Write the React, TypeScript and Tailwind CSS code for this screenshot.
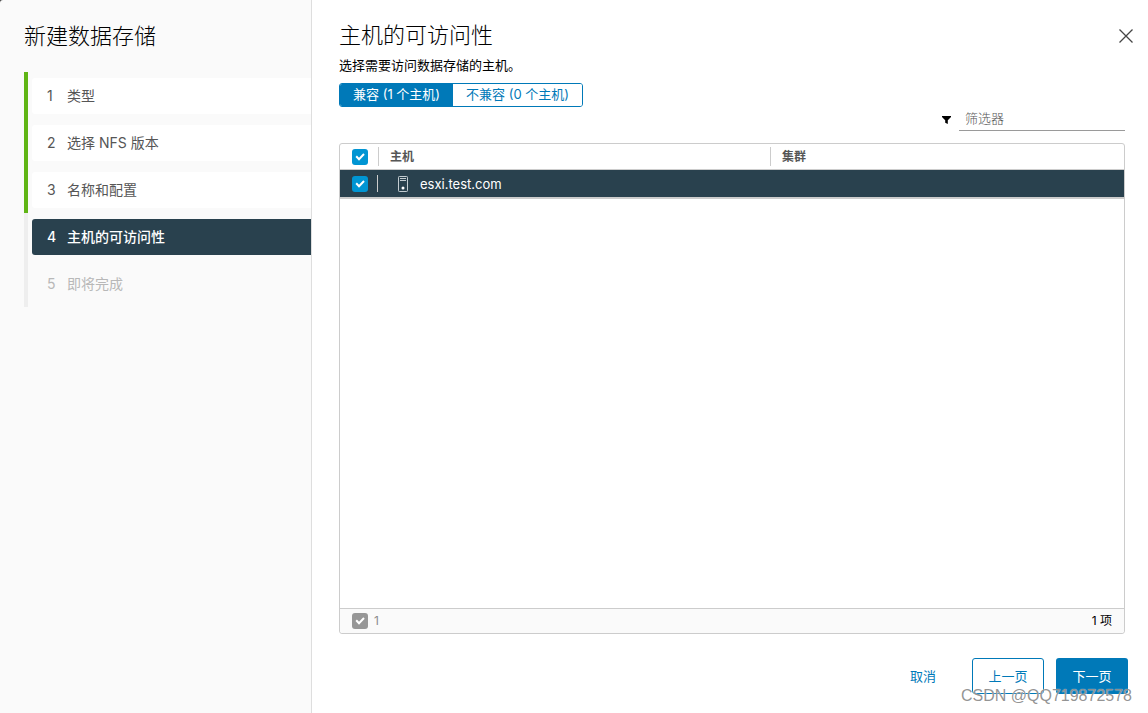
import { useState } from "react";

type StepState = "done" | "current" | "upcoming";

const steps: { label: string; state: StepState }[] = [
  { label: "类型", state: "done" },
  { label: "选择 NFS 版本", state: "done" },
  { label: "名称和配置", state: "done" },
  { label: "主机的可访问性", state: "current" },
  { label: "即将完成", state: "upcoming" },
];

const railStyles: Record<StepState, string> = {
  done: "border-[#60b515]",
  current: "border-[#eeeeee]",
  upcoming: "border-[#eeeeee]",
};

const stepStyles: Record<StepState, string> = {
  done: "bg-white text-[#565656]",
  current: "bg-[#29414e] font-medium text-white",
  upcoming: "text-[#b8b8b8]",
};

function Sidebar() {
  return (
    <aside className="w-[312px] shrink-0 border-r border-[#dedede] pt-5">
      <h1 className="pl-6 text-[22px] leading-8 font-light text-black">新建数据存储</h1>
      <ol className="mt-5 pl-6">
        {steps.map((step, i) => (
          <li
            key={step.label}
            className={`h-[47px] border-l-4 pt-1.5 pl-1 ${railStyles[step.state]}`}
          >
            <button
              type="button"
              disabled={step.state === "upcoming"}
              aria-current={step.state === "current" ? "step" : undefined}
              className={`flex h-9 w-full items-center rounded-l-[3px] pl-[15px] text-left text-sm ${stepStyles[step.state]}`}
            >
              <span className="w-5">{i + 1}</span>
              <span>{step.label}</span>
            </button>
          </li>
        ))}
      </ol>
    </aside>
  );
}

function Checkbox({
  label,
  checked,
  onChange,
  muted = false,
}: {
  label: string;
  checked: boolean;
  onChange?: (value: boolean) => void;
  muted?: boolean;
}) {
  const fill = muted ? "checked:bg-[#979797]" : "checked:bg-[#0095d3]";
  return (
    <span className="inline-grid size-4 align-middle">
      <input
        type="checkbox"
        aria-label={label}
        checked={checked}
        disabled={muted}
        onChange={(e) => onChange?.(e.target.checked)}
        className={`col-start-1 row-start-1 size-4 appearance-none rounded-[3px] border border-[#8c8c8c] bg-white checked:border-0 ${fill}`}
      />
      {checked && (
        <svg
          viewBox="0 0 16 16"
          className="pointer-events-none col-start-1 row-start-1 size-4"
          fill="none"
          stroke="white"
          strokeWidth="2"
          aria-hidden="true"
        >
          <path d="M4.2 7.3 7 10.2 12 5" />
        </svg>
      )}
    </span>
  );
}

function HostIcon() {
  return (
    <svg width="11" height="16" viewBox="0 0 11 16" fill="none" stroke="#c3ccd1" aria-hidden="true">
      <rect x="0.5" y="0.5" width="9" height="15" rx="0.8" />
      <path d="M2 2.5h6M2 4.5h6" />
      <circle cx="5" cy="12" r="1.5" fill="white" stroke="none" />
    </svg>
  );
}

function HostGrid() {
  const [selected, setSelected] = useState(true);
  return (
    <section className="mt-3 flex flex-1 flex-col rounded-[3px] border border-[#cccccc]">
      <div className="flex-1">
        <table className="w-full table-fixed border-separate border-spacing-0 text-left">
          <colgroup>
            <col className="w-[39px]" />
            <col className="w-1/2" />
            <col />
          </colgroup>
          <thead className="text-xs font-semibold text-[#565656]">
            <tr className="h-[26px]">
              <th className="border-b border-[#cccccc] p-0">
                <div className="flex h-[19px] items-center border-r border-[#cccccc] pl-3">
                  <Checkbox label="全选" checked={selected} onChange={setSelected} />
                </div>
              </th>
              <th className="border-b border-[#cccccc] p-0">
                <div className="flex h-[19px] items-center border-r border-[#cccccc] pl-[11px]">主机</div>
              </th>
              <th className="border-b border-[#cccccc] p-0">
                <div className="flex h-[19px] items-center pl-[11px]">集群</div>
              </th>
            </tr>
          </thead>
          <tbody>
            <tr className="h-[29px] bg-[#29414e] text-[13px] text-white">
              <td className="border-b-2 border-[#cccccc] p-0">
                <div className="mr-px flex h-[17px] items-center border-r border-[#cccccc] pl-3">
                  <Checkbox label="选择 esxi.test.com" checked={selected} onChange={setSelected} />
                </div>
              </td>
              <td className="border-b-2 border-[#cccccc] p-0">
                <div className="flex h-[17px] items-center gap-[11px] pl-[19px]">
                  <HostIcon />
                  <span className="pt-0.5">esxi.test.com</span>
                </div>
              </td>
              <td className="border-b-2 border-[#cccccc] p-0" />
            </tr>
          </tbody>
        </table>
      </div>
      <footer className="flex h-[25px] items-center justify-between rounded-b-[3px] border-t border-[#cccccc] bg-[#fafafa] px-3 text-xs">
        <span className="flex items-center gap-1.5 text-[#8c8c8c]">
          <Checkbox label="已选主机" checked muted />1
        </span>
        <span className="text-black">1 项</span>
      </footer>
    </section>
  );
}

export default function App() {
  const [tab, setTab] = useState(0);
  const tabs = ["兼容 (1 个主机)", "不兼容 (0 个主机)"];
  return (
    <div className="relative min-h-screen bg-[#444444] font-['Metropolis','Inter','Noto_Sans_CJK_SC',sans-serif]">
      <div className="flex min-h-screen rounded-tl-[3px] bg-[#fafafa]">
        <Sidebar />
        <main className="flex flex-1 flex-col bg-white pt-[19px] pr-5 pb-[19px] pl-[27px]">
          <div className="flex flex-1 flex-col pr-[3px]">
            <header className="flex items-center justify-between">
              <h2 className="text-[22px] leading-8 font-light text-black">主机的可访问性</h2>
              <button type="button" aria-label="关闭" className="-mr-2 pt-0.5">
                <svg width="14" height="14" viewBox="0 0 14 14" stroke="#454545" strokeWidth="1.3" aria-hidden="true">
                  <path d="M0.5 0.5l13 13M13.5 0.5l-13 13" />
                </svg>
              </button>
            </header>
            <p className="mt-1 text-[13px] leading-5 text-black">选择需要访问数据存储的主机。</p>
            <div className="mt-2 flex h-6 self-start overflow-hidden rounded-[3px] border border-[#0079b8] text-[13px]">
              {tabs.map((label, i) => (
                <button
                  key={label}
                  type="button"
                  aria-pressed={tab === i}
                  onClick={() => setTab(i)}
                  className={`flex items-center px-[13px] ${tab === i ? "bg-[#0079b8] text-white" : "bg-white text-[#0079b8]"}`}
                >
                  {label}
                </button>
              ))}
            </div>
            <div className="flex h-6 items-center justify-end gap-2">
              <svg width="9" height="8" viewBox="0 0 9 8" className="mt-px" aria-hidden="true">
                <path d="M0 0h9v1L5.8 4.2V8L3.2 6.8V4.2L0 1z" fill="black" />
              </svg>
              <input
                type="text"
                aria-label="筛选器"
                placeholder="筛选器"
                className="h-6 w-[166px] border-b border-[#9a9a9a] px-1.5 pb-0.5 text-[13px] font-light outline-none placeholder:text-[#565656]"
              />
            </div>
            <HostGrid />
          </div>
          <div className="mt-6 flex justify-end gap-3 text-[13px]">
            <button type="button" className="h-9 px-3 pt-0.5 text-[#0079b8]">
              取消
            </button>
            <button type="button" className="ml-3 h-9 w-[72px] rounded-[3px] border border-[#0079b8] pt-0.5 text-[#0079b8]">
              上一页
            </button>
            <button type="button" className="h-9 w-[72px] rounded-[3px] bg-[#0079b8] pt-0.5 text-white">
              下一页
            </button>
          </div>
        </main>
      </div>
      <div className="pointer-events-none absolute right-4 bottom-[5px] font-['Liberation_Sans',sans-serif] text-base text-[#777777]/80 [text-shadow:0_0_1px_white]">
        CSDN @QQ719872578
      </div>
    </div>
  );
}
